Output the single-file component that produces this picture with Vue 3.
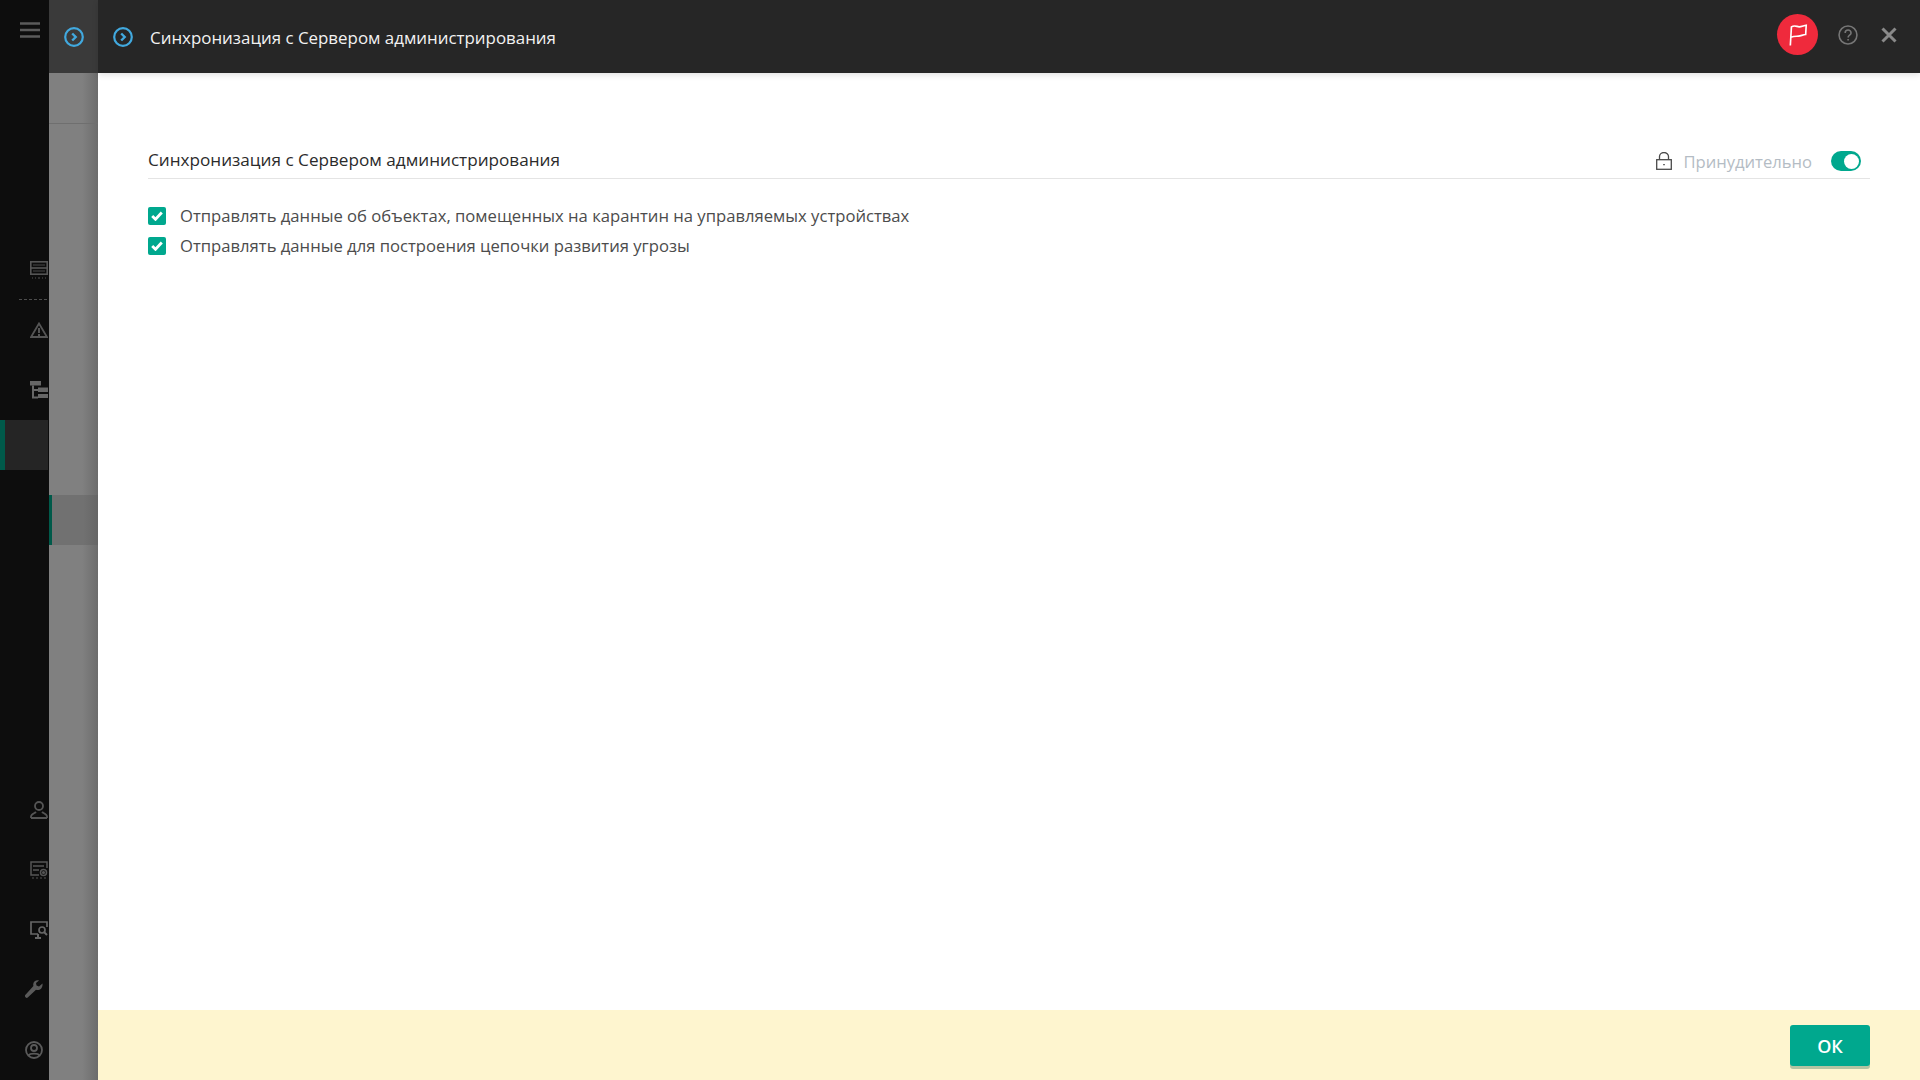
<script setup>
const options = [
  'Отправлять данные об объектах, помещенных на карантин на управляемых устройствах',
  'Отправлять данные для построения цепочки развития угрозы',
]
</script>

<template>
  <div class="app">
    <nav class="rail">
      <div class="rail-menu">
        <svg width="20" height="16" viewBox="0 0 20 16"><path d="M0 1.500h20M0 8h20M0 14.500h20" stroke="#5a5a5a" stroke-width="2.400" fill="none"/></svg>
      </div>
      <div class="rail-item rail-sep">
        <svg width="18" height="18" viewBox="0 0 18 18" fill="none" stroke="#555" stroke-width="1.600"><rect x=".8" y=".8" width="16.400" height="12.400"/><path d="M1 7h16" /><path d="M3 4h12M3 10h12" stroke="#2a2a2a" stroke-width="2"/><path d="M2 17h1M5 17h1M8 17h2M12 17h1M15 17h1" stroke-width="1"/></svg>
      </div>
      <div class="rail-item">
        <svg width="18" height="16" viewBox="0 0 18 16" fill="none"><path d="M9 1.500 1 15h16z" stroke="#555" stroke-width="1.800"/><path d="M9 6v5M9 12v2" stroke="#555" stroke-width="2"/></svg>
      </div>
      <div class="rail-item">
        <svg width="18" height="18" viewBox="0 0 18 18" fill="#666"><rect width="11" height="4.500"/><rect x="8" y="6.500" width="10" height="4.500"/><rect x="8" y="13" width="10" height="4"/><path d="M3 4.500v12h5M3 9h5" stroke="#666" stroke-width="2" fill="none"/></svg>
      </div>
      <div class="rail-active"></div>
      <div class="rail-bottom">
        <div class="rail-item">
          <svg width="18" height="18" viewBox="0 0 18 18" fill="none" stroke="#555" stroke-width="1.800"><circle cx="9" cy="5" r="4"/><path d="M1 17v-1.500c0-2.500 4-3.500 5-4.500M17 17v-1.500c0-2.500-4-3.500-5-4.500M1 17h16"/></svg>
        </div>
        <div class="rail-item">
          <svg width="18" height="18" viewBox="0 0 18 18" fill="none" stroke="#555" stroke-width="1.500"><path d="M17 7V1H1v13h8"/><path d="M3 5h11M3 9h6" stroke-width="1.600"/><circle cx="13.500" cy="11.500" r="3"/><circle cx="13.500" cy="11.500" r=".8"/><path d="M2 17h2M6 17h2M10 17h2M14 17h2" stroke-width="1"/></svg>
        </div>
        <div class="rail-item">
          <svg width="18" height="18" viewBox="0 0 18 18" fill="none" stroke="#666" stroke-width="1.700"><path d="M17 6V1H1v12h7"/><path d="M5 17h6M8 13v4" stroke-width="2"/><circle cx="12" cy="9" r="3"/><path d="m14 11 3 3" stroke-width="2"/></svg>
        </div>
        <div class="rail-item rail-shift">
          <svg class="wrench" width="18" height="18" viewBox="0 0 18 18" fill="#5a5a5a"><path d="M17.500 3.500 14 6.500l-2.500-1 -.5-2.500 3-2.500c-2.500-.8-5.500.6-5.800 3.800 0 1 .2 1.500.2 1.800L.5 14.800a1.500 1.500 0 0 0 2.500 2.500l8-7.500c3.500 1.200 7-1.500 6.500-6.300z"/></svg>
        </div>
        <div class="rail-item rail-shift">
          <svg width="18" height="18" viewBox="0 0 18 18" fill="none" stroke="#5a5a5a" stroke-width="1.800"><circle cx="9" cy="9" r="8"/><circle cx="9" cy="7" r="3"/><path d="M3.500 14.500C5 12 13 12 14.500 14.500"/></svg>
        </div>
      </div>
    </nav>

    <aside class="drawer">
      <div class="drawer-top">
        <svg class="nav-icon" width="20" height="20" viewBox="0 0 20 20" fill="none" stroke="#41a9df"><circle cx="10" cy="10" r="8.800" stroke-width="2.200"/><path d="m8.200 6.500 3.500 3.500-3.500 3.500" stroke-width="2.400"/></svg>
      </div>
      <div class="drawer-row"></div>
      <div class="drawer-current"></div>
    </aside>

    <main class="dialog">
      <header class="head">
        <svg class="nav-icon" width="20" height="20" viewBox="0 0 20 20" fill="none" stroke="#41a9df"><circle cx="10" cy="10" r="8.800" stroke-width="2.200"/><path d="m8.200 6.500 3.500 3.500-3.500 3.500" stroke-width="2.400"/></svg>
        <h1 class="head-title">Синхронизация с Сервером администрирования</h1>
        <div class="flag">
          <svg width="20" height="23" viewBox="0 0 18 21" fill="none" stroke="#fff" stroke-width="1.500"><path d="M2 20.500 3 3.500C6 1.500 8 3.500 10 3.500 12 3.500 14 2.500 16.500 2L16 10.500c-2.500.3-4.500 1.300-6.500 1.500-2 .2-4 0-7 1"/></svg>
        </div>
        <svg class="help" width="20" height="20" viewBox="0 0 19 19" fill="none" stroke="#767676" stroke-width="1.500"><circle cx="9.500" cy="9.500" r="8.500"/><path d="M6.800 7.500c0-3.600 5.600-3.600 5.600 0 0 2.200-2.800 2-2.800 4.300"/><path d="M9.600 13.200v1.600"/></svg>
        <svg class="close" width="16" height="16" viewBox="0 0 16 16" fill="none" stroke="#8a8a8a" stroke-width="3"><path d="m1.500 1.500 13 13M14.500 1.500l-13 13"/></svg>
      </header>

      <section class="content">
        <div class="section-head">
          <h2 class="section-title">Синхронизация с Сервером администрирования</h2>
          <svg class="lock" width="16" height="18" viewBox="0 0 16 18" fill="none" stroke="#4a4a4a" stroke-width="1.300"><rect x=".7" y="7.700" width="14.600" height="9.600"/><path d="M3.500 7.500V4.500a4.500 4 0 0 1 9 0v3"/><path d="M8 12v1.200" stroke-width="1.600"/></svg>
          <span class="forced">Принудительно</span>
          <span class="toggle"><span class="knob"></span></span>
        </div>
        <div class="options">
          <label v-for="text in options" :key="text" class="option">
            <span class="check">
              <svg width="12" height="10" viewBox="0 0 12 10" fill="none" stroke="#fff" stroke-width="2.800"><path d="m1.200 5 3.300 3.300L10.800 1.500"/></svg>
            </span>
            <span class="option-text">{{ text }}</span>
          </label>
        </div>
      </section>

      <footer class="foot">
        <button class="ok" type="button">ОК</button>
      </footer>
    </main>
  </div>
</template>

<style>
html, body { margin: 0; background: #fff; }
</style>

<style scoped>
.app {
  display: flex;
  width: 1920px;
  height: 1080px;
  overflow: hidden;
  font-family: "Open Sans", Lato, sans-serif;
}
.rail {
  width: 49px;
  flex: none;
  display: flex;
  flex-direction: column;
  background: #0d0d0d;
  overflow: hidden;
}
.rail-menu {
  height: 240px;
  box-sizing: border-box;
  padding: 22px 0 0 20px;
}
.rail-menu svg, .rail-item svg { display: block; }
.rail-item {
  height: 60px;
  display: flex;
  align-items: center;
  padding-left: 30px;
  box-sizing: border-box;
}
.rail-sep { position: relative; }
.rail-sep::after {
  content: "";
  position: absolute;
  left: 19px;
  right: 2px;
  bottom: 0;
  border-top: 1px dashed #4d4d4d;
}
.rail-shift { padding-left: 25px; }
.wrench { margin-top: -2px; }
.rail-active {
  height: 50px;
  margin-right: 1px;
  background: #252525;
  border-left: 5px solid #005a4a;
}
.rail-bottom { margin-top: auto; }

.drawer {
  width: 49px;
  flex: none;
  display: flex;
  flex-direction: column;
  background: linear-gradient(90deg, #808080 0, #808080 68%, #6c6c6c 100%);
}
.drawer-top {
  height: 73px;
  flex: none;
  display: flex;
  align-items: center;
  justify-content: center;
  background: #3a3a3a;
}
.drawer-row {
  height: 50px;
  flex: none;
  border-bottom: 1px solid #6f6f6f;
  margin-bottom: 371px;
}
.drawer-current {
  height: 50px;
  flex: none;
  box-sizing: border-box;
  border-left: 3px solid #005a4a;
  background: linear-gradient(90deg, #717171 0, #717171 68%, #666 100%);
}

.dialog {
  flex: 1;
  min-width: 0;
  display: flex;
  flex-direction: column;
  background: #fff;
}
.head {
  height: 73px;
  flex: none;
  box-sizing: border-box;
  display: flex;
  align-items: center;
  padding: 0 23px 0 15px;
  background: #262626;
  box-shadow: 0 2px 6px rgba(0, 0, 0, .12);
}
.nav-icon { display: block; flex: none; }
.head-title {
  margin: 2px 0 0 17px;
  flex: 1;
  font-size: 16.900px;
  font-weight: 400;
  color: #f2f2f2;
}
.flag {
  width: 41px;
  height: 41px;
  border-radius: 50%;
  background: #ef2a3c;
  display: flex;
  align-items: center;
  justify-content: center;
  margin: -5px 20px 0 0;
}
.help { margin: -3px 23px 0 0; }
.close { margin-top: -3px; }

.content {
  flex: 1;
  padding: 71px 50px 0;
}
.section-head {
  display: flex;
  align-items: center;
  height: 34px;
  border-bottom: 1px solid #e4e4e4;
}
.section-title {
  flex: 1;
  margin: 0 0 3px;
  font-size: 17.150px;
  font-weight: 400;
  color: #2b2b2b;
}
.lock { margin-right: 11px; }
.forced {
  font-size: 16.600px;
  color: #b4bcc4;
  margin-right: 19px;
}
.toggle {
  width: 30px;
  height: 20px;
  box-sizing: border-box;
  margin-right: 9px;
  border-radius: 10px;
  background: #00a88e;
  display: flex;
  align-items: center;
  justify-content: flex-end;
  padding-right: 2px;
}
.knob {
  width: 15px;
  height: 15px;
  border-radius: 50%;
  background: #fff;
}
.options {
  margin-top: 27px;
  display: flex;
  flex-direction: column;
  gap: 10px;
}
.option {
  display: flex;
  align-items: center;
  gap: 14px;
  height: 20px;
  font-size: 16.650px;
  color: #4c4c4c;
}
.option-text { margin-top: -1px; }
.check {
  width: 18px;
  height: 18px;
  border-radius: 2px;
  background: #00a88e;
  display: flex;
  align-items: center;
  justify-content: center;
}
.foot {
  height: 70px;
  flex: none;
  box-sizing: border-box;
  display: flex;
  align-items: flex-start;
  justify-content: flex-end;
  padding: 15px 50px 0 0;
  background: #fef5cf;
}
.ok {
  width: 80px;
  height: 41px;
  border: 0;
  border-radius: 3px;
  background: #00a88e;
  box-shadow: 0 3px 0 #b3c4a2;
  color: #fff;
  font: 600 18px "Open Sans", sans-serif;
}
</style>
